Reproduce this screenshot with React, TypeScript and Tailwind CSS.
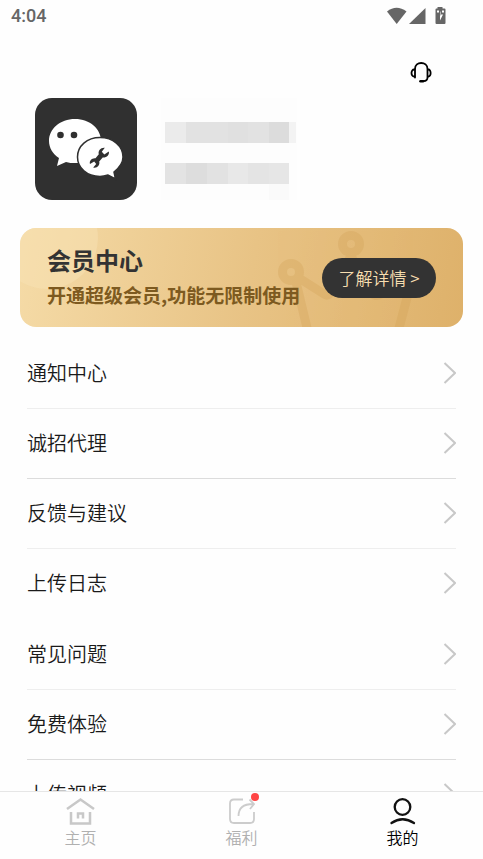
import React from "react";

type MenuItem = { label: string; line: string };

const groups: MenuItem[][] = [
  [
    { label: "通知中心", line: "border-[#eeeeee]" },
    { label: "诚招代理", line: "border-[#dcdcdc]" },
    { label: "反馈与建议", line: "border-[#eeeeee]" },
    { label: "上传日志", line: "border-transparent" },
  ],
  [
    { label: "常见问题", line: "border-[#eeeeee]" },
    { label: "免费体验", line: "border-[#dcdcdc]" },
    { label: "上传视频", line: "border-[#eeeeee]" },
  ],
];

function StatusBar() {
  return (
    <div className="flex h-8 shrink-0 items-center justify-between pl-[11px] pr-9 text-[#666666]">
      <span className="font-[Roboto,sans-serif] text-lg font-medium">4:04</span>
      <svg width="61" height="18" viewBox="0 0 61 18" aria-hidden="true" fill="currentColor">
        <path d="M1 4.5Q10.500-3 20.500 4.500L10.700 17z" />
        <path d="M39.500 1V17H23z" />
        <path d="M51.500 0h5v1.500h2q1 0 1 1V16q0 1-1 1h-8q-1 0-1-1V2.500q0-1 1-1h1z" />
        <path d="M51 3.500h2v2h-2zM56 3.500h2v2h-2zM54.500 4.500v4h-2.500h2v5l3-6h-2v-3z" fill="#fff" />
      </svg>
    </div>
  );
}

function AppLogo() {
  return (
    <svg width="102" height="102" viewBox="0 0 102 102" className="shrink-0" role="img" aria-label="头像">
      <rect width="102" height="102" rx="17" fill="#303030" />
      <path d="M40 21C25 21 14 31 14 43c0 7 4 13 10 17l-2 8 9-4c3 1 6 1 9 1 15 0 26-10 26-22S55 21 40 21z" fill="#fff" />
      <circle cx="25.500" cy="37" r="3.300" fill="#303030" />
      <circle cx="39" cy="37" r="3.300" fill="#303030" />
      <path
        d="M65 39.500C52 39.500 42.500 48 42.500 59S52 78.500 65 78.500c3 0 5-.5 8-1.500l7.500 4-1.500-7c5-4 9-9 9-15C88 48 78 39.500 65 39.500z"
        fill="#fff"
        stroke="#303030"
        strokeWidth="1.500"
      />
      <path
        d="M73.800 53.500l-4.500 3-2.500-2.700 3-4c-4-.5-7 3-6 6.500l-3.300 4c-3.500-.5-6.500 2.500-5.500 5.700l4.200-2.500 2 2.500-3 3.500c4 1 7-2.500 6-6l3.500-4c4 .3 7-2.500 6.100-6z"
        fill="#303030"
      />
    </svg>
  );
}

function HiddenProfile() {
  return (
    <div className="flex w-[136px] flex-col bg-[#fdfdfd] pl-1" aria-hidden="true">
      <div className="mt-6 flex h-[21px]">
        <span className="w-[21px] bg-[#ebebeb]" />
        <span className="w-[42px] bg-[#e2e2e2]" />
        <span className="w-5 bg-[#e0e0e0]" />
        <span className="w-[21px] bg-[#e2e2e2]" />
        <span className="w-5 bg-[#dcdcdc]" />
        <span className="w-[7px] bg-[#f3f3f3]" />
      </div>
      <div className="mt-5 flex h-[21px]">
        <span className="w-[21px] bg-[#e3e3e3]" />
        <span className="w-[21px] bg-[#dddddd]" />
        <span className="w-[21px] bg-[#e2e2e2]" />
        <span className="w-5 bg-[#e8e8e8]" />
        <span className="w-[21px] bg-[#e4e4e4]" />
        <span className="w-5 bg-[#e6e6e6]" />
      </div>
      <div className="flex grow">
        <span className="ml-[104px] w-5 bg-[#fafafa]" />
      </div>
    </div>
  );
}

function MemberBanner() {
  return (
    <section className="relative mx-5 mt-7 flex h-[99px] shrink-0 items-center justify-between overflow-hidden rounded-2xl bg-linear-[100deg,#f5dba7,#e8c385_52%,#deb16a] px-[27px]">
      <svg className="absolute left-0 top-0" width="90" height="99" aria-hidden="true">
        <circle cx="27" cy="10" r="51" fill="#f7e1b4" fillOpacity="0.5" />
      </svg>
      <svg className="absolute right-0 top-0" width="200" height="99" viewBox="243 0 200 99" aria-hidden="true">
        <g fill="none" stroke="#cf9f55" opacity="0.3" strokeWidth="9">
          <circle cx="271" cy="44" r="8.500" />
          <circle cx="331" cy="16" r="8.500" />
          <path d="M276.500 56L288 104M282 52l22 14q4 3 7-2l20-36 20 36q4 6 10 2M388 66l-10 38" strokeLinecap="round" strokeLinejoin="round" />
        </g>
      </svg>
      <div className="relative pb-0.5">
        <h2 className="text-2xl leading-9 font-bold text-[#333333]">会员中心</h2>
        <p className="text-[19px] leading-[34px] font-bold whitespace-nowrap text-[#7d5a20]">开通超级会员,功能无限制使用</p>
      </div>
      <button type="button" className="relative h-10 w-[114px] shrink-0 rounded-full bg-[#333333] text-[17px] font-[350] whitespace-nowrap text-[#f7deb0]">
        了解详情 &gt;
      </button>
    </section>
  );
}

function MenuRow({ label, line }: MenuItem) {
  return (
    <li>
      <button type="button" className={`flex h-[70px] w-full items-center justify-between border-b pb-0.5 text-left text-xl font-[350] text-[#1a1a1a] ${line}`}>
        {label}
        <svg width="13" height="22" viewBox="0 0 13 22" fill="none" stroke="#c8c8c8" strokeWidth="2" aria-hidden="true">
          <path d="M1.500 1l10.500 10L1.500 21" />
        </svg>
      </button>
    </li>
  );
}

function BottomNav() {
  const item = "flex flex-1 flex-col items-center pt-1 text-base leading-[22px] font-[350]";
  return (
    <nav className="flex h-[68px] shrink-0 border-t border-[#e6e6e6] bg-[#fefefe]">
      <button type="button" className={`${item} text-[#b0b0b0]`}>
        <svg width="30" height="30" viewBox="0 0 30 30" fill="none" stroke="#c8c8c8" strokeWidth="2.500" aria-hidden="true">
          <path d="M1 13L14.500 3.500 28 13M5 16v11.500h19V16" />
          <path d="M12 22.500v-5h5v5" />
        </svg>
        主页
      </button>
      <button type="button" className={`${item} text-[#b0b0b0]`}>
        <span className="relative">
          <svg width="30" height="30" viewBox="0 0 30 30" fill="none" stroke="#cccccc" strokeWidth="1.800" aria-hidden="true">
            <path d="M16 3.500H7q-4 0-4 4v15.500q0 4 4 4h16q4 0 4-4v-7" />
            <path d="M11.500 20C11.500 12 16 8 26 8M22.500 3.500L27 8l-4 5" />
          </svg>
          <span className="absolute -right-0.5 -top-[3px] size-2 rounded-full bg-[#ff4545]" />
        </span>
        福利
      </button>
      <button type="button" className={`${item} text-black`} aria-current="page">
        <svg width="30" height="30" viewBox="0 0 30 30" fill="none" stroke="#111111" strokeWidth="2.300" strokeLinecap="round" aria-hidden="true">
          <circle cx="14.500" cy="11" r="7.800" />
          <path d="M3.500 27q11-7.500 22.500 0" />
        </svg>
        我的
      </button>
    </nav>
  );
}

export default function App() {
  return (
    <div className="flex h-screen flex-col bg-[#fefefe] font-['Noto_Sans_CJK_SC',sans-serif]">
      <StatusBar />
      <main className="flex min-h-0 grow flex-col overflow-y-auto [scrollbar-width:none]">
        <header className="shrink-0">
          <div className="flex h-[66px] justify-end pr-[50px] pt-7">
            <button type="button" aria-label="客服" className="size-6">
              <svg width="24" height="24" viewBox="0 0 24 24" fill="none" stroke="#000" strokeWidth="1.800" strokeLinecap="round" strokeLinejoin="round" aria-hidden="true">
                <path d="M6 17.500V9c0-4 3-6 6.200-6s6.300 2 6.300 6v8.500c0 2-1.500 3.500-4 3.700" />
                <path d="M5.500 9.500C1.500 9 1.500 17 5.500 16.500M19 9.500c3.500-.5 3.500 7.500 0 7" />
                <path d="M11.500 21.300h2.500" strokeWidth="2.600" />
              </svg>
            </button>
          </div>
          <div className="flex gap-6 pl-[35px]">
            <AppLogo />
            <HiddenProfile />
          </div>
        </header>
        <MemberBanner />
        <div className="mt-3 flex flex-col gap-px px-[27px]">
          {groups.map((group) => (
            <ul key={group[0].label}>
              {group.map((entry) => (
                <MenuRow key={entry.label} {...entry} />
              ))}
            </ul>
          ))}
        </div>
      </main>
      <BottomNav />
    </div>
  );
}
